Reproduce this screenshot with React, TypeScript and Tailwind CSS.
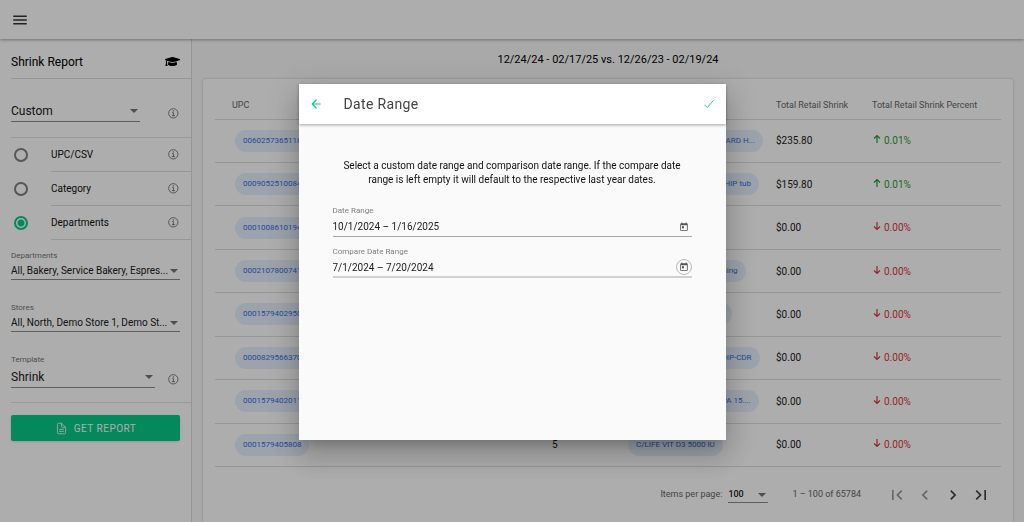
import type { ReactNode } from "react";
import { FaGraduationCap } from "react-icons/fa";
import { IoCheckmark, IoDocumentTextOutline, IoInformationCircleOutline } from "react-icons/io5";
import {
  MdArrowBack,
  MdChevronLeft,
  MdChevronRight,
  MdFirstPage,
  MdLastPage,
  MdMenu,
  MdToday,
} from "react-icons/md";

type ReportRow = {
  upc: string;
  units: number;
  name: string;
  shrink: string;
  percent: string;
  up: boolean;
};

const rows: ReportRow[] = [
  { upc: "0060257365118", units: 12, name: "ROTISSERIE BIRD STANDARD H...", shrink: "$235.80", percent: "0.01%", up: true },
  { upc: "0009052510084", units: 10, name: "STRAWBERRY CREAM WHIP tub", shrink: "$159.80", percent: "0.01%", up: true },
  { upc: "0001008610194", units: 8, name: "ORGANIC TEA", shrink: "$0.00", percent: "0.00%", up: false },
  { upc: "0002107800741", units: 7, name: "Zesty Italian House Dressing", shrink: "$0.00", percent: "0.00%", up: false },
  { upc: "0001579402950", units: 6, name: "C/LIFE VIT B12 1000 MG", shrink: "$0.00", percent: "0.00%", up: false },
  { upc: "0000829566370", units: 6, name: "EXTRA SHARP CHEESE DIP-CDR", shrink: "$0.00", percent: "0.00%", up: false },
  { upc: "0001579402011", units: 5, name: "C/LIFE OMEGA 3 FISH EPA 15....", shrink: "$0.00", percent: "0.00%", up: false },
  { upc: "0001579405808", units: 5, name: "C/LIFE VIT D3 5000 IU", shrink: "$0.00", percent: "0.00%", up: false },
];

const reportTypes = ["UPC/CSV", "Category", "Departments"];

const Caret = () => (
  <svg viewBox="0 0 8 4" className="pointer-events-none h-1 w-2 shrink-0 fill-[#757575]">
    <path d="M0 0h8L4 4z" />
  </svg>
);

const TrendArrow = ({ up }: { up: boolean }) => (
  <svg
    viewBox="0 0 10 10"
    className="mb-[3px] size-[10px] fill-none stroke-current stroke-[1.2]"
    aria-label={up ? "Up" : "Down"}
  >
    <path d={up ? "M5 9V1.5M2 4.5l3-3 3 3" : "M5 1v7.5M2 5.5l3 3 3-3"} />
  </svg>
);

const InfoButton = ({ label }: { label: string }) => (
  <button type="button" aria-label={label} className="shrink-0 text-[#666]">
    <IoInformationCircleOutline size={13} />
  </button>
);

type SelectFieldProps = {
  id: string;
  label?: string;
  value: string;
  large?: boolean;
};

const SelectField = ({ id, label, value, large }: SelectFieldProps) => (
  <div className="min-w-0 flex-1">
    {label && (
      <label htmlFor={id} className="block text-[8px] leading-3 text-[#757575]">
        {label}
      </label>
    )}
    <div className={`flex items-center border-b border-[#8a8a8a] pr-[2px] ${large ? "h-[22px]" : "h-[18px]"}`}>
      <select
        id={id}
        aria-label={label ?? "Report period"}
        className={`min-w-0 flex-1 appearance-none bg-transparent text-[#212121] outline-none ${large ? "text-[12px]" : "text-[10px]"}`}
      >
        <option>{value}</option>
      </select>
      <Caret />
    </div>
  </div>
);

const Sidebar = () => (
  <aside className="w-48 shrink-0 border-r border-[#dcdcdc] bg-white pl-[11px]">
    <div className="flex h-10 items-center justify-between border-b border-[#dedede] pt-[6px] pr-[11px]">
      <h1 className="text-[12px] text-black">Shrink Report</h1>
      <FaGraduationCap size={15} />
    </div>

    <div className="flex h-[59px] items-end gap-[27px] border-b border-[#e4e4e4] pr-[11px] pb-[15px]">
      <SelectField id="period" value="Custom" large />
      <div className="flex pb-[2px]">
        <InfoButton label="About report periods" />
      </div>
    </div>

    <div role="radiogroup" aria-label="Report type">
      {reportTypes.map((type) => (
        <div key={type} className="flex h-[34px] items-center pl-[3px]">
          <input
            id={type}
            type="radio"
            name="report-type"
            defaultChecked={type === "Departments"}
            className="mr-[23px] size-[14px] shrink-0 appearance-none rounded-full border-2 border-[#808080] checked:border-[#06ca8a] checked:bg-[radial-gradient(circle,#06ca8a_3px,transparent_4px)]"
          />
          <div className="flex h-full flex-1 items-center justify-between border-b border-[#dedede] pr-[11px]">
            <label htmlFor={type} className="text-[10px] text-[#111]">
              {type}
            </label>
            <InfoButton label={`About ${type}`} />
          </div>
        </div>
      ))}
    </div>

    <div className="mt-[10px] flex pr-[11px]">
      <SelectField id="departments" label="Departments" value="All, Bakery, Service Bakery, Espres..." />
    </div>
    <div className="mt-[22px] flex pr-[11px]">
      <SelectField id="stores" label="Stores" value="All, North, Demo Store 1, Demo St..." />
    </div>
    <div className="mt-[22px] flex items-end gap-3 border-b border-[#e4e4e4] pr-[11px] pb-[14px]">
      <SelectField id="template" label="Template" value="Shrink" large />
      <div className="flex pb-[2px]">
        <InfoButton label="About templates" />
      </div>
    </div>

    <div className="pt-3 pr-[11px]">
      <button
        type="button"
        className="flex h-[26px] w-full items-center justify-center gap-[6px] rounded-[2px] bg-[#06ca8a] text-[10px] tracking-wider text-white shadow"
      >
        <IoDocumentTextOutline size={13} />
        GET REPORT
      </button>
    </div>
  </aside>
);

const Chip = ({ children }: { children: ReactNode }) => (
  <a
    href="#"
    className="inline-flex h-[22px] items-center rounded-full bg-[#e8f0fe] px-2 text-[8px] whitespace-nowrap text-[#2f6fe4]"
  >
    {children}
  </a>
);

const ReportTable = () => (
  <table className="h-[377px] w-full table-fixed border-collapse text-left">
    <thead>
      <tr className="h-[29px] border-b border-[#dedede] text-[9px] text-[#666]">
        <th className="w-[330px] pt-[2px] pl-[17px] font-normal">UPC</th>
        <th className="w-[80px] pt-[2px] font-normal">Units</th>
        <th className="w-[151px] pt-[2px] font-normal">Description</th>
        <th className="w-[96px] pt-[2px] font-normal">Total Retail Shrink</th>
        <th className="pt-[2px] font-normal">Total Retail Shrink Percent</th>
      </tr>
    </thead>
    <tbody>
      {rows.map((row) => (
        <tr key={row.upc} className="border-b border-[#dedede] text-[10px] text-[#212121]">
          <td className="pl-5">
            <Chip>{row.upc}</Chip>
          </td>
          <td className="pl-[7px]">{row.units}</td>
          <td className="pl-[3px]">
            <Chip>{row.name}</Chip>
          </td>
          <td>{row.shrink}</td>
          <td className={row.up ? "text-[#1f9d3a]" : "text-[#dc3545]"}>
            <span className="flex items-center gap-[2px]">
              <TrendArrow up={row.up} />
              {row.percent}
            </span>
          </td>
        </tr>
      ))}
    </tbody>
  </table>
);

const Paginator = () => (
  <div className="flex h-14 items-center justify-end pr-[10px] text-[9px] text-[#666]">
    <label htmlFor="page-size">Items per page:</label>
    <div className="ml-[6px] flex h-4 w-10 items-center border-b border-[#8a8a8a] pr-[2px]">
      <select
        id="page-size"
        className="min-w-0 flex-1 appearance-none text-[9px] font-medium text-[#212121] outline-none"
      >
        <option>100</option>
      </select>
      <Caret />
    </div>
    <span className="mr-[26px] ml-6">1 – 100 of 65784</span>
    <div className="flex gap-2 text-[#444]">
      <button type="button" aria-label="First page" disabled className="text-[#999]">
        <MdFirstPage size={20} />
      </button>
      <button type="button" aria-label="Previous page" disabled className="text-[#999]">
        <MdChevronLeft size={20} />
      </button>
      <button type="button" aria-label="Next page">
        <MdChevronRight size={20} />
      </button>
      <button type="button" aria-label="Last page">
        <MdLastPage size={20} />
      </button>
    </div>
  </div>
);

type DateFieldProps = {
  id: string;
  label: string;
  value: string;
  focused?: boolean;
};

const DateField = ({ id, label, value, focused }: DateFieldProps) => (
  <div className="h-[41px]">
    <label htmlFor={id} className="block text-[8px] leading-3 text-[#808080]">
      {label}
    </label>
    <div className={`flex h-5 items-center ${focused ? "border-b-2 border-[#d0d0d0]" : "border-b border-[#a8a8a8]"}`}>
      <input id={id} defaultValue={value} className="min-w-0 flex-1 text-[10px] text-[#212121] outline-none" />
      <button
        type="button"
        aria-label={`Open ${label} calendar`}
        className={`flex size-4 items-center justify-center rounded-full border text-[#555] ${focused ? "border-[#bbb]" : "border-transparent"}`}
      >
        <MdToday size={10} />
      </button>
    </div>
  </div>
);

const DateRangeDialog = () => (
  <div className="fixed inset-0 flex items-center justify-center bg-black/32 pt-[2px]">
    <div
      role="dialog"
      aria-modal="true"
      aria-labelledby="dialog-title"
      className="min-h-[356px] w-[427px] bg-[#fafafa] shadow-[0_8px_11px_-5px_rgba(0,0,0,0.2),0_17px_27px_2px_rgba(0,0,0,0.14),0_6px_33px_6px_rgba(0,0,0,0.12)]"
    >
      <header className="flex h-10 items-center bg-white px-[10px] shadow-[0_1px_3px_rgba(0,0,0,0.35)]">
        <button type="button" aria-label="Back" className="text-[#06ca8a]">
          <MdArrowBack size={14} />
        </button>
        <h2 id="dialog-title" className="ml-[21px] flex-1 text-[14px] tracking-wide text-[#444]">
          Date Range
        </h2>
        <button type="button" aria-label="Apply" className="text-[#06ca8a]">
          <IoCheckmark size={14} />
        </button>
      </header>
      <div className="px-[34px] pt-[35px]">
        <p className="px-2 text-center text-[10px] leading-[14px] text-[#111]">
          Select a custom date range and comparison date range. If the compare date range is left empty it will default
          to the respective last year dates.
        </p>
        <div className="mt-[18px]">
          <DateField id="range" label="Date Range" value="10/1/2024 – 1/16/2025" />
          <DateField id="compare" label="Compare Date Range" value="7/1/2024 – 7/20/2024" focused />
        </div>
      </div>
    </div>
  </div>
);

export default function App() {
  return (
    <div className="flex h-screen flex-col overflow-hidden bg-[#fafafa] font-[Roboto,sans-serif]">
      <header className="relative flex h-[39px] shrink-0 items-center bg-white px-[11px] shadow-[0_1px_3px_rgba(0,0,0,0.35)]">
        <button type="button" aria-label="Menu" className="text-[#333]">
          <MdMenu size={18} />
        </button>
      </header>
      <div className="flex min-h-0 flex-1">
        <Sidebar />
        <main className="flex min-w-0 flex-1 flex-col px-[11px]">
          <p className="flex h-10 shrink-0 items-center justify-center pt-[2px] text-[11px] text-black">
            12/24/24 - 02/17/25 vs. 12/26/23 - 02/19/24
          </p>
          <section className="flex-1 rounded-[3px] bg-white px-3 pt-[11px] shadow-[0_0_3px_rgba(0,0,0,0.2)]">
            <ReportTable />
            <Paginator />
          </section>
        </main>
      </div>
      <DateRangeDialog />
    </div>
  );
}
